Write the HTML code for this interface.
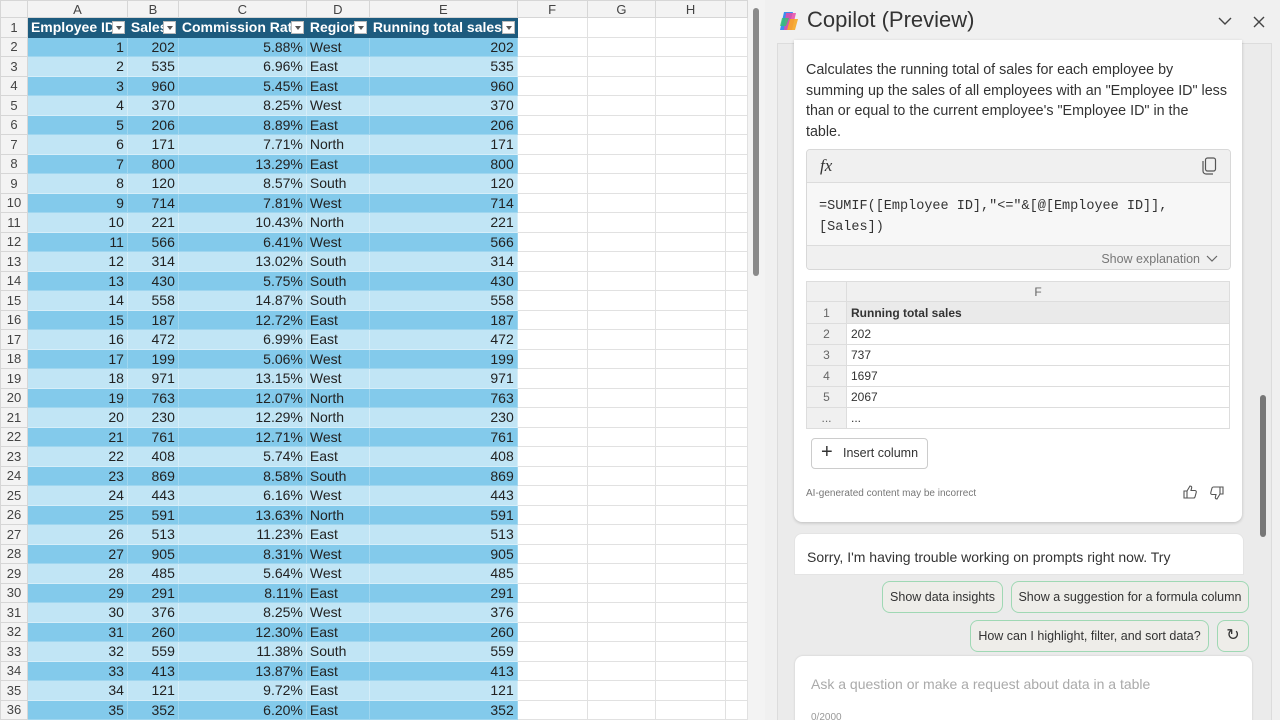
<!DOCTYPE html><html><head><style>
body{margin:0;width:1280px;height:720px;overflow:hidden;background:#fff;font-family:"Liberation Sans",sans-serif;position:relative}
#xl{position:absolute;left:0;top:0;width:748px;height:720px;overflow:hidden}
table.g{border-collapse:collapse;table-layout:fixed;font-size:14px}
table.g td{height:18.5px;padding:0 3px;border:1px solid #e1e1e1;white-space:nowrap;overflow:hidden;color:#222}
table.g tr.h td{height:16px;background:#f3f3f3;text-align:center;color:#444;font-size:13px;border-color:#d6d6d6}
table.g td.r{background:#f3f3f3;text-align:center;color:#444;font-size:13px;border-color:#d6d6d6}
tr.t td.c{background:#1d5b7e;color:#fff;font-weight:bold;border-color:#1d5b7e;position:relative}
tr.t td.c span.dd{position:absolute;right:2px;top:3px;width:13px;height:13px;background:#fff;border:1px solid #bbb;box-sizing:border-box}
tr.t td.c span.dd:after{content:"";position:absolute;left:3px;top:4px;border:3px solid transparent;border-top:4px solid #555}
tr.o td.c{background:#83caeb;border-color:#9fd6ef}
tr.e td.c{background:#c1e5f5;border-color:#d6eef9}
td.n{text-align:right}
#sb{position:absolute;left:748px;top:0;width:17px;height:720px;background:#f3f3f3}
#sb div{position:absolute;left:5px;top:8px;width:6px;height:268px;background:#8a8a8a;border-radius:3px}
#cp{position:absolute;left:765px;top:0;width:515px;height:720px;background:#f0f0f0;overflow:hidden}
.card{position:absolute;background:#fff;border-radius:8px;box-shadow:0 1px 3px rgba(0,0,0,.2)}
.chip{position:absolute;border:1px solid #9fd8b4;border-radius:8px;font-size:12.5px;color:#333;background:#eeede9;line-height:30px;text-align:center}
</style></head><body>
<div id="xl"><table class="g">
<colgroup><col style="width:27px"><col style="width:100px"><col style="width:51px"><col style="width:128px"><col style="width:63px"><col style="width:148px"><col style="width:70px"><col style="width:69px"><col style="width:70px"><col style="width:22px"></colgroup>
<tr class="h"><td></td><td>A</td><td>B</td><td>C</td><td>D</td><td>E</td><td>F</td><td>G</td><td>H</td><td></td></tr>
<tr class="t"><td class="r">1</td><td class="c">Employee ID<span class="dd"></span></td><td class="c">Sales<span class="dd"></span></td><td class="c">Commission Rate<span class="dd"></span></td><td class="c">Region<span class="dd"></span></td><td class="c">Running total sales<span class="dd"></span></td><td></td><td></td><td></td><td></td></tr>
<tr class="o"><td class="r">2</td><td class="c n">1</td><td class="c n">202</td><td class="c n">5.88%</td><td class="c">West</td><td class="c n">202</td><td></td><td></td><td></td><td></td></tr>
<tr class="e"><td class="r">3</td><td class="c n">2</td><td class="c n">535</td><td class="c n">6.96%</td><td class="c">East</td><td class="c n">535</td><td></td><td></td><td></td><td></td></tr>
<tr class="o"><td class="r">4</td><td class="c n">3</td><td class="c n">960</td><td class="c n">5.45%</td><td class="c">East</td><td class="c n">960</td><td></td><td></td><td></td><td></td></tr>
<tr class="e"><td class="r">5</td><td class="c n">4</td><td class="c n">370</td><td class="c n">8.25%</td><td class="c">West</td><td class="c n">370</td><td></td><td></td><td></td><td></td></tr>
<tr class="o"><td class="r">6</td><td class="c n">5</td><td class="c n">206</td><td class="c n">8.89%</td><td class="c">East</td><td class="c n">206</td><td></td><td></td><td></td><td></td></tr>
<tr class="e"><td class="r">7</td><td class="c n">6</td><td class="c n">171</td><td class="c n">7.71%</td><td class="c">North</td><td class="c n">171</td><td></td><td></td><td></td><td></td></tr>
<tr class="o"><td class="r">8</td><td class="c n">7</td><td class="c n">800</td><td class="c n">13.29%</td><td class="c">East</td><td class="c n">800</td><td></td><td></td><td></td><td></td></tr>
<tr class="e"><td class="r">9</td><td class="c n">8</td><td class="c n">120</td><td class="c n">8.57%</td><td class="c">South</td><td class="c n">120</td><td></td><td></td><td></td><td></td></tr>
<tr class="o"><td class="r">10</td><td class="c n">9</td><td class="c n">714</td><td class="c n">7.81%</td><td class="c">West</td><td class="c n">714</td><td></td><td></td><td></td><td></td></tr>
<tr class="e"><td class="r">11</td><td class="c n">10</td><td class="c n">221</td><td class="c n">10.43%</td><td class="c">North</td><td class="c n">221</td><td></td><td></td><td></td><td></td></tr>
<tr class="o"><td class="r">12</td><td class="c n">11</td><td class="c n">566</td><td class="c n">6.41%</td><td class="c">West</td><td class="c n">566</td><td></td><td></td><td></td><td></td></tr>
<tr class="e"><td class="r">13</td><td class="c n">12</td><td class="c n">314</td><td class="c n">13.02%</td><td class="c">South</td><td class="c n">314</td><td></td><td></td><td></td><td></td></tr>
<tr class="o"><td class="r">14</td><td class="c n">13</td><td class="c n">430</td><td class="c n">5.75%</td><td class="c">South</td><td class="c n">430</td><td></td><td></td><td></td><td></td></tr>
<tr class="e"><td class="r">15</td><td class="c n">14</td><td class="c n">558</td><td class="c n">14.87%</td><td class="c">South</td><td class="c n">558</td><td></td><td></td><td></td><td></td></tr>
<tr class="o"><td class="r">16</td><td class="c n">15</td><td class="c n">187</td><td class="c n">12.72%</td><td class="c">East</td><td class="c n">187</td><td></td><td></td><td></td><td></td></tr>
<tr class="e"><td class="r">17</td><td class="c n">16</td><td class="c n">472</td><td class="c n">6.99%</td><td class="c">East</td><td class="c n">472</td><td></td><td></td><td></td><td></td></tr>
<tr class="o"><td class="r">18</td><td class="c n">17</td><td class="c n">199</td><td class="c n">5.06%</td><td class="c">West</td><td class="c n">199</td><td></td><td></td><td></td><td></td></tr>
<tr class="e"><td class="r">19</td><td class="c n">18</td><td class="c n">971</td><td class="c n">13.15%</td><td class="c">West</td><td class="c n">971</td><td></td><td></td><td></td><td></td></tr>
<tr class="o"><td class="r">20</td><td class="c n">19</td><td class="c n">763</td><td class="c n">12.07%</td><td class="c">North</td><td class="c n">763</td><td></td><td></td><td></td><td></td></tr>
<tr class="e"><td class="r">21</td><td class="c n">20</td><td class="c n">230</td><td class="c n">12.29%</td><td class="c">North</td><td class="c n">230</td><td></td><td></td><td></td><td></td></tr>
<tr class="o"><td class="r">22</td><td class="c n">21</td><td class="c n">761</td><td class="c n">12.71%</td><td class="c">West</td><td class="c n">761</td><td></td><td></td><td></td><td></td></tr>
<tr class="e"><td class="r">23</td><td class="c n">22</td><td class="c n">408</td><td class="c n">5.74%</td><td class="c">East</td><td class="c n">408</td><td></td><td></td><td></td><td></td></tr>
<tr class="o"><td class="r">24</td><td class="c n">23</td><td class="c n">869</td><td class="c n">8.58%</td><td class="c">South</td><td class="c n">869</td><td></td><td></td><td></td><td></td></tr>
<tr class="e"><td class="r">25</td><td class="c n">24</td><td class="c n">443</td><td class="c n">6.16%</td><td class="c">West</td><td class="c n">443</td><td></td><td></td><td></td><td></td></tr>
<tr class="o"><td class="r">26</td><td class="c n">25</td><td class="c n">591</td><td class="c n">13.63%</td><td class="c">North</td><td class="c n">591</td><td></td><td></td><td></td><td></td></tr>
<tr class="e"><td class="r">27</td><td class="c n">26</td><td class="c n">513</td><td class="c n">11.23%</td><td class="c">East</td><td class="c n">513</td><td></td><td></td><td></td><td></td></tr>
<tr class="o"><td class="r">28</td><td class="c n">27</td><td class="c n">905</td><td class="c n">8.31%</td><td class="c">West</td><td class="c n">905</td><td></td><td></td><td></td><td></td></tr>
<tr class="e"><td class="r">29</td><td class="c n">28</td><td class="c n">485</td><td class="c n">5.64%</td><td class="c">West</td><td class="c n">485</td><td></td><td></td><td></td><td></td></tr>
<tr class="o"><td class="r">30</td><td class="c n">29</td><td class="c n">291</td><td class="c n">8.11%</td><td class="c">East</td><td class="c n">291</td><td></td><td></td><td></td><td></td></tr>
<tr class="e"><td class="r">31</td><td class="c n">30</td><td class="c n">376</td><td class="c n">8.25%</td><td class="c">West</td><td class="c n">376</td><td></td><td></td><td></td><td></td></tr>
<tr class="o"><td class="r">32</td><td class="c n">31</td><td class="c n">260</td><td class="c n">12.30%</td><td class="c">East</td><td class="c n">260</td><td></td><td></td><td></td><td></td></tr>
<tr class="e"><td class="r">33</td><td class="c n">32</td><td class="c n">559</td><td class="c n">11.38%</td><td class="c">South</td><td class="c n">559</td><td></td><td></td><td></td><td></td></tr>
<tr class="o"><td class="r">34</td><td class="c n">33</td><td class="c n">413</td><td class="c n">13.87%</td><td class="c">East</td><td class="c n">413</td><td></td><td></td><td></td><td></td></tr>
<tr class="e"><td class="r">35</td><td class="c n">34</td><td class="c n">121</td><td class="c n">9.72%</td><td class="c">East</td><td class="c n">121</td><td></td><td></td><td></td><td></td></tr>
<tr class="o"><td class="r">36</td><td class="c n">35</td><td class="c n">352</td><td class="c n">6.20%</td><td class="c">East</td><td class="c n">352</td><td></td><td></td><td></td><td></td></tr>
</table></div>
<div id="sb"><div></div></div>
<div id="cp">
<svg style="position:absolute;left:13px;top:10px" width="22" height="22" viewBox="0 0 22 22"><path d="M6 2h9l-5 18H2z" fill="#3b8df0"/><path d="M8 3h10l-4 17H6z" fill="#e84ba8" opacity=".85"/><path d="M12 9h8l-3 11H9z" fill="#f6a623" opacity=".9"/><path d="M4 8h7L8 16H2z" fill="#35c26e" opacity=".8"/></svg>
<div style="position:absolute;left:42px;top:7px;font-size:22px;color:#333">Copilot (Preview)</div>
<svg style="position:absolute;left:452px;top:15px" width="16" height="12"><path d="M2 3l6 6 6-6" fill="none" stroke="#444" stroke-width="1.4"/></svg>
<svg style="position:absolute;left:487px;top:15px" width="14" height="14"><path d="M2 2l10 10M12 2L2 12" stroke="#444" stroke-width="1.4"/></svg>
<div style="position:absolute;left:12px;top:43px;width:493px;height:690px;border:1px solid #dcdcdc;background:#ebebeb"></div>
<div style="position:absolute;left:495px;top:395px;width:6px;height:142px;background:#777;border-radius:3px"></div>
<div class="card" style="left:29px;top:40px;width:448px;height:482px;border-radius:0 0 8px 8px">
<div style="position:absolute;left:12px;top:20px;width:430px;white-space:nowrap;font-size:14.3px;line-height:20.5px;color:#333">Calculates the running total of sales for each employee by<br>summing up the sales of all employees with an "Employee ID" less<br>than or equal to the current employee's "Employee ID" in the<br>table.</div>
<div style="position:absolute;left:12px;top:109px;width:423px;height:119px;border:1px solid #d8d8d8;border-radius:4px;background:#f7f7f7;overflow:hidden">
<div style="height:32px;background:#f0f0f0;border-bottom:1px solid #dcdcdc;position:relative"><i style="position:absolute;left:13px;top:6px;font-family:'Liberation Serif',serif;font-size:17px;color:#333">fx</i><svg style="position:absolute;right:13px;top:7px" width="16" height="18"><rect x="4.5" y="1" width="10" height="13" rx="2" fill="none" stroke="#555" stroke-width="1.2"/><path d="M2 4v10a3 3 0 0 0 3 3h7" fill="none" stroke="#555" stroke-width="1.2"/></svg></div>
<div style="padding:14px 12px;height:34px;font-family:'Liberation Mono',monospace;font-size:13.5px;line-height:20.5px;color:#333;background:#f7f7f7;border-bottom:1px solid #dcdcdc">=SUMIF([Employee ID],"&lt;="&amp;[@[Employee ID]],<br>[Sales])</div>
<div style="background:#f0f0f0;height:26px;text-align:right;font-size:12.5px;color:#777;padding-right:30px;line-height:26px;position:relative">Show explanation<svg style="position:absolute;right:12px;top:9px" width="12" height="8"><path d="M1 1l5 5 5-5" fill="none" stroke="#666" stroke-width="1.2"/></svg></div>
</div>
<table style="position:absolute;left:12px;top:241px;width:424px;border-collapse:collapse;font-size:12px;color:#333;border:1px solid #ccc">
<tr style="background:#f0f0f0;height:20px"><td style="width:37px;border:1px solid #ddd"></td><td style="text-align:center;border:1px solid #ddd;color:#666">F</td></tr>
<tr style="height:22px"><td style="text-align:center;border:1px solid #ddd;background:#f0f0f0;color:#666">1</td><td style="font-weight:bold;background:#eaeaea;border:1px solid #ddd;padding-left:4px">Running total sales</td></tr>
<tr style="height:21px"><td style="text-align:center;border:1px solid #ddd;background:#f0f0f0;color:#666">2</td><td style="border:1px solid #ddd;padding-left:4px">202</td></tr>
<tr style="height:21px"><td style="text-align:center;border:1px solid #ddd;background:#f0f0f0;color:#666">3</td><td style="border:1px solid #ddd;padding-left:4px">737</td></tr>
<tr style="height:21px"><td style="text-align:center;border:1px solid #ddd;background:#f0f0f0;color:#666">4</td><td style="border:1px solid #ddd;padding-left:4px">1697</td></tr>
<tr style="height:21px"><td style="text-align:center;border:1px solid #ddd;background:#f0f0f0;color:#666">5</td><td style="border:1px solid #ddd;padding-left:4px">2067</td></tr>
<tr style="height:21px"><td style="text-align:center;border:1px solid #ddd;background:#f0f0f0;color:#666">...</td><td style="border:1px solid #ddd;padding-left:4px">...</td></tr>
</table>
<div style="position:absolute;left:17px;top:398px;width:115px;height:29px;border:1px solid #ccc;border-radius:4px;font-size:12.5px;color:#333;line-height:29px"><span style="font-size:20px;position:absolute;left:9px;top:-1px">+</span><span style="position:absolute;left:31px">Insert column</span></div>
<div style="position:absolute;left:12px;top:448px;font-size:10px;color:#777">AI-generated content may be incorrect</div>
<svg style="position:absolute;left:389px;top:445px" width="14" height="14"><path d="M1 6h3v7H1zM4 6l3-5c1.5 0 2 1 1.5 2.5L8 5.5h4c1 0 1.5 1 1.2 2l-1.2 4.5c-.3.8-.8 1-1.5 1H4" fill="none" stroke="#555" stroke-width="1.1"/></svg>
<svg style="position:absolute;left:416px;top:446px" width="14" height="14"><g transform="rotate(180 7 7)"><path d="M1 6h3v7H1zM4 6l3-5c1.5 0 2 1 1.5 2.5L8 5.5h4c1 0 1.5 1 1.2 2l-1.2 4.5c-.3.8-.8 1-1.5 1H4" fill="none" stroke="#555" stroke-width="1.1"/></g></svg>
</div>
<div class="card" style="left:29px;top:533px;width:448px;height:40px;border-radius:8px 8px 0 0;box-shadow:none;border:1px solid #e4e4e4;overflow:hidden"><div style="position:absolute;left:12px;top:15px;font-size:14px;color:#333">Sorry, I'm having trouble working on prompts right now. Try</div></div>
<div class="chip" style="left:117px;top:581px;width:119px">Show data insights</div>
<div class="chip" style="left:246px;top:581px;width:236px">Show a suggestion for a formula column</div>
<div class="chip" style="left:205px;top:620px;width:237px">How can I highlight, filter, and sort data?</div>
<div class="chip" style="left:452px;top:620px;width:30px;font-size:16px">↻</div>
<div class="card" style="left:30px;top:656px;width:457px;height:80px;box-shadow:0 0 2px rgba(0,0,0,.15)">
<div style="position:absolute;left:16px;top:20px;font-size:14px;color:#aaa">Ask a question or make a request about data in a table</div>
<div style="position:absolute;left:16px;top:56px;font-size:10px;color:#999">0/2000</div>
</div>
</div>
</body></html>
